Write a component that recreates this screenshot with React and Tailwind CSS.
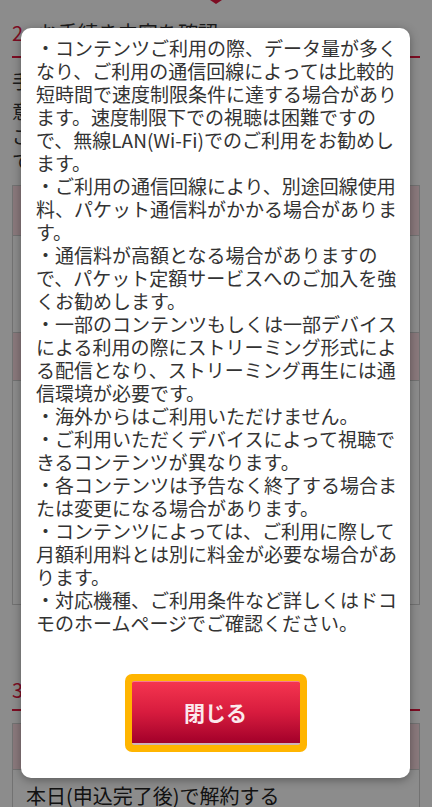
import React from "react"

const noticeLines = [
  "・コンテンツご利用の際、データ量が多く",
  "なり、ご利用の通信回線によっては比較的",
  "短時間で速度制限条件に達する場合があり",
  "ます。速度制限下での視聴は困難ですの",
  "で、無線LAN(Wi-Fi)でのご利用をお勧めし",
  "ます。",
  "・ご利用の通信回線により、別途回線使用",
  "料、パケット通信料がかかる場合がありま",
  "す。",
  "・通信料が高額となる場合がありますの",
  "で、パケット定額サービスへのご加入を強",
  "くお勧めします。",
  "・一部のコンテンツもしくは一部デバイス",
  "による利用の際にストリーミング形式によ",
  "る配信となり、ストリーミング再生には通",
  "信環境が必要です。",
  "・海外からはご利用いただけません。",
  "・ご利用いただくデバイスによって視聴で",
  "きるコンテンツが異なります。",
  "・各コンテンツは予告なく終了する場合ま",
  "たは変更になる場合があります。",
  "・コンテンツによっては、ご利用に際して",
  "月額利用料とは別に料金が必要な場合があ",
  "ります。",
  "・対応機種、ご利用条件など詳しくはドコ",
  "モのホームページでご確認ください。"
]

const SectionTitle = ({ num, title, className = "" }) => (
  <h2
    className={`flex items-center gap-[15px] border-b-2 border-[#e4163f] text-[20px] leading-[24px] font-normal text-[#333] ${className}`}
  >
    <span className="text-[#e4163f]">{num}</span>
    <span>{title}</span>
  </h2>
)

const BackgroundPage = () => (
  <div className="px-3">
    <div className="mx-auto h-0 w-0 border-x-[6px] border-t-[4px] border-x-transparent border-t-[#e4163f]" />
    <SectionTitle num="2" title="お手続き内容を確認" className="mt-[17px] pb-[11px]" />
    <p className="mt-[10px] text-[19px] leading-[25px] text-[#333] whitespace-nowrap">手続き内容をご確認のうえ、お進みください。</p>
    <p className="mt-[5px] text-[19px] leading-[25px] text-[#333]">
      <span className="block whitespace-nowrap">意向確認のため、以下の内容をご覧ください。</span>
      <span className="block whitespace-nowrap">ご契約内容によって料金が異なります。</span>
      <span className="block whitespace-nowrap">てつづきの内容をご確認ください。</span>
    </p>
    <div className="mt-[12px] flex flex-col border border-[#cfcfcf]">
      <div className="h-[49px] bg-[#fbdde2]" />
      <div className="h-[97px] border-t border-[#cfcfcf] bg-white" />
      <div className="h-[48px] border-t border-[#cfcfcf] bg-[#fbdde2]" />
      <div className="h-[224px] border-t border-[#cfcfcf] bg-white" />
    </div>
    <SectionTitle num="3" title="解約日の選択" className="mt-[73px] pb-[7px]" />
    <div className="mt-[12px] flex flex-col border-x border-t border-[#cfcfcf]">
      <div className="h-[45px] bg-[#fbdde2]" />
      <div className="border-t border-[#cfcfcf] bg-white px-[13px] pt-[14px] pb-4 text-[20px] leading-[24px] text-[#222] whitespace-nowrap">
        本日(申込完了後)で解約する
      </div>
    </div>
  </div>
)

export default function App() {
  return (
    <div className="relative h-[807px] w-[432px] overflow-hidden bg-white font-['Noto_Sans_CJK_JP','Noto_Sans',sans-serif]">
      <BackgroundPage />
      <div className="absolute inset-0 bg-black/45" />
      <div className="absolute left-[21px] top-[28px] flex h-[750px] w-[389px] flex-col items-center rounded-[10px] bg-white shadow-[0_2px_10px_rgba(0,0,0,0.35)]">
        <div className="w-full pl-[15px] pt-[8px] text-[19px] leading-[23px] text-[#333]">
          {noticeLines.map((line, i) => (
            <span key={i} className="block whitespace-nowrap">
              {line}
            </span>
          ))}
        </div>
        <div className="mt-[40px] rounded-[7px] bg-[#ffb500] p-[7px]">
          <button
            type="button"
            className="flex h-[64px] w-[168px] items-center justify-center rounded-[2px] border-t border-b-2 border-t-[#f57a92] border-b-[#cdb3b8] bg-gradient-to-b from-[#f5344f] via-[#d71b3e] to-[#a3002a] text-[21px] font-bold text-[#fbe9ed]"
          >
            閉じる
          </button>
        </div>
      </div>
    </div>
  )
}
